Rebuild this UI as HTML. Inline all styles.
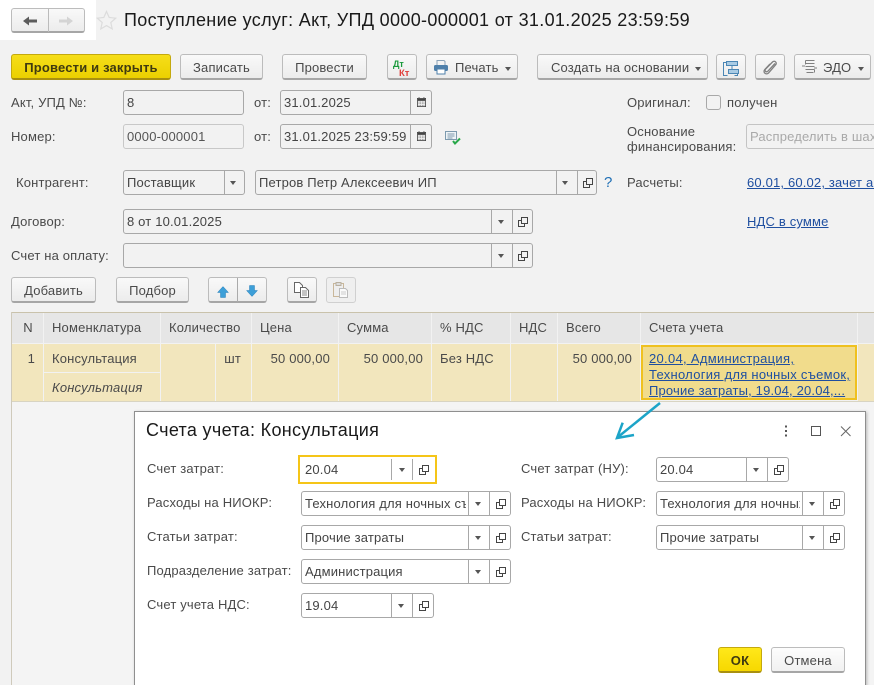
<!DOCTYPE html>
<html lang="ru"><head><meta charset="utf-8"><title>Поступление услуг</title>
<style>
html,body{margin:0;padding:0;width:874px;height:685px;overflow:hidden}
body{background:#f2f2f2;font:13px/16px "Liberation Sans",sans-serif;letter-spacing:.17px;color:#4a4a4a}
#p{position:absolute;left:0;top:0;width:874px;height:685px;overflow:hidden}
#p div,#p a,#p svg{position:absolute;box-sizing:border-box}
.l{white-space:nowrap;height:16px}
.b{height:26px;border:1px solid #bcbcbc;border-bottom:2px solid #a6a6a6;border-radius:3px;background:linear-gradient(#f9f9f9,#ececec);text-align:center;line-height:25px;white-space:nowrap;color:#4a4a4a}
.y{background:linear-gradient(#f6de1a,#ebd000);border:1px solid #c4a90e;border-bottom:2px solid #a99010;font-weight:bold;color:#3f3a10}
.f{height:25px;border:1px solid #a8a8a8;border-radius:3px;background:#f2f2f2;padding-left:3px;line-height:23px;white-space:nowrap;overflow:hidden;color:#444}
.w{background:#fff}
#p .d{top:0;bottom:0;width:1px;background:#a8a8a8}
#p .t{width:0;height:0;border:3.5px solid transparent;border-top:4px solid #555;border-bottom:0;top:10px}
#p .o{width:10px;height:10px;top:7px;margin-left:1px}
.h{top:313px;height:30px;background:#e6e6e6;line-height:29px;padding-left:8px;white-space:nowrap;color:#4a4a4a}
.c{top:344px;height:57px;background:#f2e6bd;padding:7px 8px;white-space:nowrap;color:#4a4a4a}
.r{text-align:right}
a{color:#1f4fa0;text-decoration:underline;white-space:nowrap}
</style></head><body><div id="p">
<svg width="0" height="0" style="left:0;top:0"><symbol id="op" viewBox="0 0 10 10"><path d="M3.500 .5h6v6h-6zM3.500 3.500H.5v6h6V6.500" fill="none" stroke="#444"/></symbol>
<symbol id="cal" viewBox="0 0 11 13"><path d="M2.500 0v2M8.500 0v2" stroke="#444"/><rect x=".5" y="1.500" width="10" height="10" fill="none" stroke="#444"/><rect x="1" y="2" width="9" height="2.500" fill="#444"/><path d="M2 6h7M2 8h7M2 10h7" stroke="#666" stroke-dasharray="1 1"/></symbol></svg>

<!-- top nav -->
<div style="left:0;top:0;width:96px;height:40px;background:#fff"></div>
<div class="b" style="left:11px;top:8px;width:74px;height:25px"></div>
<div style="left:48px;top:9px;width:1px;height:23px;background:#bbb"></div>
<svg style="left:22px;top:15px" width="16" height="12" viewBox="0 0 16 12"><path d="M1 6l6-4.500V4.500h8v3H7V10.500z" fill="#5c5c5c"/></svg>
<svg style="left:58px;top:15px" width="16" height="12" viewBox="0 0 16 12"><path d="M15 6l-6-4.500V4.500H1v3h8v3z" fill="#d4d4d4"/></svg>
<svg style="left:96px;top:10px" width="21" height="21" viewBox="0 0 21 21"><path d="M10.500 1.500l2.700 6 6.500.7-4.900 4.300 1.400 6.400-5.700-3.300-5.700 3.300 1.400-6.400L1.300 8.200l6.500-.7z" fill="none" stroke="#dcdcdc" stroke-width="1.200"/></svg>
<div class="l" style="left:124px;top:9px;height:22px;font-size:18px;line-height:22px;color:#1a1a1a;letter-spacing:.33px">Поступление услуг: Акт, УПД 0000-000001 от 31.01.2025 23:59:59</div>

<!-- toolbar -->
<div class="b y" style="left:11px;top:54px;width:160px">Провести и закрыть</div>
<div class="b" style="left:180px;top:54px;width:83px">Записать</div>
<div class="b" style="left:282px;top:54px;width:85px">Провести</div>
<div class="b" style="left:387px;top:54px;width:30px"></div>
<div class="l" style="left:393px;top:59px;font:bold 9px/11px 'Liberation Sans',sans-serif;color:#1a9a3c;letter-spacing:0">Дт</div>
<div class="l" style="left:399px;top:68px;font:bold 9.500px/11px 'Liberation Sans',sans-serif;color:#e0403c;letter-spacing:0">Кт</div>
<div class="b" style="left:426px;top:54px;width:92px;text-align:left;padding-left:28px">Печать</div>
<svg style="left:433px;top:60px" width="16" height="15" viewBox="0 0 16 15"><path d="M4 .5h7l1 1v4H4z" fill="#f4f4f4" stroke="#8aa2b8"/><rect x="1" y="5" width="14" height="6" rx="1.500" fill="#4f80ab"/><rect x="4" y="9" width="8" height="5" fill="#fff" stroke="#4f80ab"/></svg>
<div class="t" style="left:505px;top:67px"></div>
<div class="b" style="left:537px;top:54px;width:171px;text-align:left;padding-left:13px">Создать на основании</div>
<div class="t" style="left:695px;top:67px"></div>
<div class="b" style="left:716px;top:54px;width:30px"></div>
<svg style="left:723px;top:60px" width="16" height="16" viewBox="0 0 16 16"><path d="M3.500 2.500H.5v13h4M11.500 15.500h3v-5" fill="none" stroke="#4b86b4"/><rect x="3.500" y="1.500" width="11" height="4" fill="#a9cbe4" stroke="#4b86b4"/><rect x="5.500" y="9.500" width="10" height="4" fill="#a9cbe4" stroke="#4b86b4"/><path d="M9 5.500v4" stroke="#4b86b4"/></svg>
<div class="b" style="left:755px;top:54px;width:30px"></div>
<svg style="left:762px;top:59px" width="16" height="17" viewBox="0 0 16 17"><path d="M13 4.500L6 12c-1.500 1.700-4 0-2.500-1.800L10.500 3c2-2 5 .5 3 3L6.500 14c-2.500 2.500-6-.8-3.700-3.500L8 5" fill="none" stroke="#808080" stroke-width="1.300"/></svg>
<div class="b" style="left:794px;top:54px;width:77px;text-align:left;padding-left:28px">ЭДО</div>
<svg style="left:801px;top:60px" width="17" height="15" viewBox="0 0 17 15"><path d="M4.500.5h9M4.500 3.500h9M4.500 6.500h9M4.500 9.500h9M5.500 12.500h7M4.500.5v4M13.500 9.500v3M1 6h3M13 8h3" fill="none" stroke="#808080"/></svg>
<div class="t" style="left:858px;top:67px"></div>

<!-- header fields -->
<div class="l" style="left:11px;top:95px">Акт, УПД №:</div>
<div class="f" style="left:123px;top:90px;width:121px">8</div>
<div class="l" style="left:254px;top:95px">от:</div>
<div class="f" style="left:280px;top:90px;width:152px">31.01.2025<div class="d" style="left:129px"></div>
<svg style="left:136px;top:6px" width="9" height="11"><use href="#cal"/></svg></div>
<div class="l" style="left:11px;top:129px">Номер:</div>
<div class="f" style="left:123px;top:124px;width:121px;border-color:#c8c8c8;color:#555">0000-000001</div>
<div class="l" style="left:254px;top:129px">от:</div>
<div class="f" style="left:280px;top:124px;width:152px">31.01.2025 23:59:59<div class="d" style="left:129px"></div>
<svg style="left:136px;top:6px" width="9" height="11"><use href="#cal"/></svg></div>
<svg style="left:445px;top:131px" width="16" height="14" viewBox="0 0 16 14"><path d="M.5.500h11v8H.5z" fill="#eef3f6" stroke="#7d9aae"/><path d="M2.500 3h7M2.500 5h7M2.500 7h5" stroke="#7d9aae"/><path d="M8 10l2 2.500 5-5" fill="none" stroke="#29a84a" stroke-width="2"/></svg>

<div class="l" style="left:627px;top:95px">Оригинал:</div>
<div style="left:706px;top:95px;width:15px;height:15px;border:1px solid #a8a8a8;border-radius:3px"></div>
<div class="l" style="left:727px;top:95px">получен</div>
<div class="l" style="left:627px;top:124px">Основание</div>
<div class="l" style="left:627px;top:139px">финансирования:</div>
<div class="f" style="left:746px;top:124px;width:140px;border-color:#c4c4c4;color:#a9a9a9">Распределить в шахматном</div>

<div class="l" style="left:16px;top:175px">Контрагент:</div>
<div class="f" style="left:123px;top:170px;width:122px">Поставщик<div class="d" style="left:100px"></div><div class="t" style="left:106px"></div></div>
<div class="f" style="left:255px;top:170px;width:342px">Петров Петр Алексеевич ИП<div class="d" style="left:300px"></div><div class="t" style="left:306px"></div><div class="d" style="left:321px"></div><svg class="o" style="left:326px"><use href="#op"/></svg></div>
<div class="l" style="left:604px;top:175px;color:#1f6fb5;font-size:15px">?</div>
<div class="l" style="left:627px;top:175px">Расчеты:</div>
<a style="left:747px;top:175px">60.01, 60.02, зачет аванса</a>

<div class="l" style="left:11px;top:214px">Договор:</div>
<div class="f" style="left:123px;top:209px;width:410px">8 от 10.01.2025<div class="d" style="left:367px"></div><div class="t" style="left:374px"></div><div class="d" style="left:388px"></div><svg class="o" style="left:393px"><use href="#op"/></svg></div>
<a style="left:747px;top:214px">НДС в сумме</a>
<div class="l" style="left:11px;top:248px">Счет на оплату:</div>
<div class="f" style="left:123px;top:243px;width:410px"><div class="d" style="left:367px"></div><div class="t" style="left:374px"></div><div class="d" style="left:388px"></div><svg class="o" style="left:393px"><use href="#op"/></svg></div>

<!-- table toolbar -->
<div class="b" style="left:11px;top:277px;width:85px">Добавить</div>
<div class="b" style="left:116px;top:277px;width:73px">Подбор</div>
<div class="b" style="left:208px;top:277px;width:59px"></div>
<div style="left:237px;top:278px;width:1px;height:24px;background:#aaa"></div>
<svg style="left:217px;top:286px" width="12" height="12" viewBox="0 0 12 12"><path d="M6 .5l5.500 6H8.500v5h-5v-5H.5z" fill="#3d9fd8" stroke="#2c80b8" stroke-width=".5"/></svg>
<svg style="left:246px;top:285px" width="12" height="12" viewBox="0 0 12 12"><path d="M6 11.500l5.500-6H8.500v-5h-5v5H.5z" fill="#3d9fd8" stroke="#2c80b8" stroke-width=".5"/></svg>
<div class="b" style="left:287px;top:277px;width:30px"></div>
<svg style="left:294px;top:282px" width="16" height="16" viewBox="0 0 16 16"><path d="M.5.500h5l3 3v7h-8z" fill="#fff" stroke="#666"/><path d="M6.500 5.500h5l3 3v7h-8z" fill="#fff" stroke="#666"/><path d="M8 9h5M8 11h5M8 13h5" stroke="#888"/></svg>
<div style="left:326px;top:277px;width:30px;height:26px;border:1px solid #d0d0d0;border-radius:3px;background:#efefef"></div>
<svg style="left:333px;top:282px" width="16" height="16" viewBox="0 0 16 16"><rect x=".5" y="1.500" width="10" height="13" fill="#eee" stroke="#c9b79a"/><rect x="3" y=".5" width="5" height="3" fill="#ddd" stroke="#b9b0a0"/><path d="M6.500 6.500h6l2 2v7h-8z" fill="#fafafa" stroke="#bbb"/><path d="M8 10h5M8 12h5" stroke="#ccc"/></svg>

<!-- table -->
<div style="left:11px;top:312px;width:863px;height:1px;background:#c9c2ab"></div>
<div style="left:11px;top:312px;width:1px;height:373px;background:#cfcabb"></div>
<div style="left:12px;top:402px;width:862px;height:283px;background:#f4f4f4"></div>
<div class="h" style="left:12px;width:31px;text-align:center;padding:0 0 0 1px">N</div>
<div class="h" style="left:44px;width:116px">Номенклатура</div>
<div class="h" style="left:161px;width:90px">Количество</div>
<div class="h" style="left:252px;width:86px">Цена</div>
<div class="h" style="left:339px;width:92px">Сумма</div>
<div class="h" style="left:432px;width:78px">% НДС</div>
<div class="h" style="left:511px;width:46px">НДС</div>
<div class="h" style="left:558px;width:82px">Всего</div>
<div class="h" style="left:641px;width:216px">Счета учета</div>
<div class="h" style="left:858px;width:16px"></div>

<div class="c r" style="left:12px;width:31px;padding-right:8px">1</div>
<div class="c" style="left:44px;width:116px;height:28px">Консультация</div>
<div class="c" style="left:44px;top:373px;width:116px;height:28px;font-style:italic">Консультация</div>
<div class="c" style="left:161px;width:54px"></div>
<div class="c r" style="left:216px;width:35px;padding-right:10px">шт</div>
<div class="c r" style="left:252px;width:86px;padding-right:8px">50 000,00</div>
<div class="c r" style="left:339px;width:92px;padding-right:8px">50 000,00</div>
<div class="c" style="left:432px;width:78px">Без НДС</div>
<div class="c" style="left:511px;width:46px"></div>
<div class="c r" style="left:558px;width:82px;padding-right:8px">50 000,00</div>
<div class="c" style="left:641px;top:345px;width:216px;height:55px;background:#f1dc8c;border:2px solid #efc11f;padding:4px 6px;line-height:16px"><a style="position:static;display:block;letter-spacing:.3px">20.04, Администрация,</a><a style="position:static;display:block;letter-spacing:.28px">Технология для ночных съемок,</a><a style="position:static;display:block">Прочие затраты, 19.04, 20.04,...</a></div>
<div class="c" style="left:858px;width:16px"></div>
<div style="left:12px;top:401px;width:862px;height:1px;background:#d8d4c2"></div>

<!-- dialog -->
<div style="left:134px;top:411px;width:732px;height:280px;background:#fff;border:1px solid #8f8f8f;box-shadow:1px 1px 3px rgba(0,0,0,.25)"></div>
<div class="l" style="left:146px;top:419px;height:22px;font-size:18px;line-height:22px;color:#1a1a1a;letter-spacing:.32px">Счета учета: Консультация</div>
<svg style="left:780px;top:423px" width="72" height="16" viewBox="0 0 72 16"><path d="M6 2.500v2M6 7v2M6 11.500v2" stroke="#555" stroke-width="2"/><rect x="31.500" y="3.500" width="9" height="9" fill="none" stroke="#555"/><path d="M61 3.500l9.500 9.500M70.500 3.500L61 13" stroke="#666"/></svg>

<div class="l" style="left:147px;top:461px">Счет затрат:</div>
<div style="left:298px;top:455px;width:139px;height:29px;border:2px solid #f5c518;line-height:25px;padding-left:5px;color:#444">20.04<div class="d" style="left:91px;top:2px;bottom:2px"></div><div class="t" style="left:99px;top:11px"></div><div class="d" style="left:112px;top:2px;bottom:2px"></div><svg class="o" style="left:118px;top:8px"><use href="#op"/></svg></div>

<div class="l" style="left:147px;top:495px">Расходы на НИОКР:</div>
<div class="f w" style="left:301px;top:491px;width:210px">Технология для ночных съемок<div style="left:164px;top:0;bottom:0;width:44px;background:#fff"></div><div class="d" style="left:166px"></div><div class="t" style="left:173px"></div><div class="d" style="left:187px"></div><svg class="o" style="left:193px"><use href="#op"/></svg></div>
<div class="l" style="left:147px;top:529px">Статьи затрат:</div>
<div class="f w" style="left:301px;top:525px;width:210px">Прочие затраты<div class="d" style="left:166px"></div><div class="t" style="left:173px"></div><div class="d" style="left:187px"></div><svg class="o" style="left:193px"><use href="#op"/></svg></div>
<div class="l" style="left:147px;top:563px">Подразделение затрат:</div>
<div class="f w" style="left:301px;top:559px;width:210px">Администрация<div class="d" style="left:166px"></div><div class="t" style="left:173px"></div><div class="d" style="left:187px"></div><svg class="o" style="left:193px"><use href="#op"/></svg></div>
<div class="l" style="left:147px;top:597px">Счет учета НДС:</div>
<div class="f w" style="left:301px;top:593px;width:133px">19.04<div class="d" style="left:89px"></div><div class="t" style="left:96px"></div><div class="d" style="left:110px"></div><svg class="o" style="left:116px"><use href="#op"/></svg></div>

<div class="l" style="left:521px;top:461px">Счет затрат (НУ):</div>
<div class="f w" style="left:656px;top:457px;width:133px">20.04<div class="d" style="left:89px"></div><div class="t" style="left:96px"></div><div class="d" style="left:110px"></div><svg class="o" style="left:116px"><use href="#op"/></svg></div>
<div class="l" style="left:521px;top:495px">Расходы на НИОКР:</div>
<div class="f w" style="left:656px;top:491px;width:189px">Технология для ночных съемок<div style="left:143px;top:0;bottom:0;width:44px;background:#fff"></div><div class="d" style="left:145px"></div><div class="t" style="left:152px"></div><div class="d" style="left:166px"></div><svg class="o" style="left:172px"><use href="#op"/></svg></div>
<div class="l" style="left:521px;top:529px">Статьи затрат:</div>
<div class="f w" style="left:656px;top:525px;width:189px">Прочие затраты<div class="d" style="left:145px"></div><div class="t" style="left:152px"></div><div class="d" style="left:166px"></div><svg class="o" style="left:172px"><use href="#op"/></svg></div>

<div class="b y" style="left:718px;top:647px;width:44px;background:linear-gradient(#ffe81a,#f7d800)">ОК</div>
<div class="b" style="left:771px;top:647px;width:74px;background:linear-gradient(#fdfdfd,#f1f1f1)">Отмена</div>

<!-- arrow -->
<svg style="left:610px;top:400px" width="56" height="44" viewBox="0 0 56 44"><path d="M50 3L8 37" stroke="#1ca4c8" stroke-width="2.500" fill="none"/><path d="M12.700 22.700L7 38l17-3" stroke="#1ca4c8" stroke-width="2.500" fill="none"/></svg>
</div></body></html>
